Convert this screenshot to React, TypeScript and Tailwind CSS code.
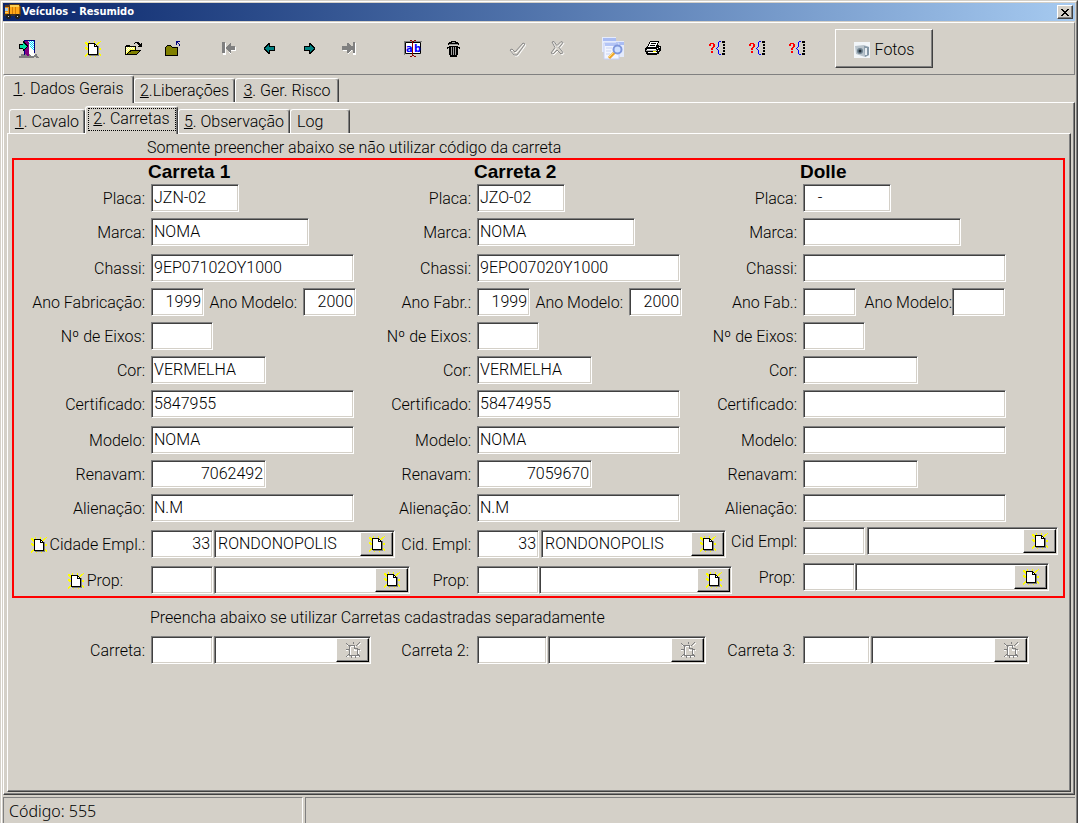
import { ReactNode } from "react";

const sunken =
  "bg-white border border-t-[#808080] border-l-[#808080] border-b-white border-r-white shadow-[inset_1px_1px_0_#404040,inset_-1px_-1px_0_#d4d0c8]";

const NewIcon = ({ disabled = false }: { disabled?: boolean }) => (
  <svg
    width="16"
    height="16"
    viewBox="0 0 16 16"
    shapeRendering="crispEdges"
    className="shrink-0"
  >
    {disabled ? (
      <>
        <path
          d="M2 2h1v1h1v1H2zM15 1h1v1h-1v1h-1v1h-1V3h1V2h1zM5 4h6v1H5zM5 4v10h1V4zM6 14h8v1H6zM13 7h1v8h-1zM1 8h2v1H1zM15 8h1v1h-1zM2 14h2v1H2zM14 13h1v2h-1zM9 5h1v3h3v1H9z"
          fill="#fff"
        />
        <path
          d="M1 1h1v1h1v1h1v1H3V3H2V2H1zM14 0h1v1h-1v1h-1v1h-1v1h-1V3h1V2h1V1h1zM8 0h1v2H8zM4 3h6v1H4zM4 3h1v11H4zM4 13h9v1H4zM12 6h1v8h-1zM9 3h1v3h3v1H9zM1 7h3v1H1zM13 7h2v1h-2zM1 14h1v-1h1v-1h1v1H3v1H2v1H1zM13 12h1v1h1v2h-1v-1h-1zM6 14h1v2H6zM10 14h1v2h-1z"
          fill="#808080"
        />
      </>
    ) : (
      <>
        <path
          d="M0 1h2v1h1v1h1v2H2V4H1V3H0zM15 0h1v1h-1v1h-1v1h-1v1h-1v1h-2V4h1V3h1V2h1V1h1zM4 0h1v2H4zM9 0h1v2H9zM0 6h2v1h1v2H1V8H0zM14 7h2v2h-2zM0 14h1v-1h1v-1h2v2H2v1H1v1H0zM14 12h1v1h1v2h-1v-1h-1zM5 14h1v2H5zM10 14h1v2h-1z"
          fill="#ffff00"
        />
        <path d="M12 5h2v10H4v-1h8z" fill="#808080" />
        <path d="M3 2h7v1h1v1h1v1h1v9H3z" fill="#000" />
        <path d="M4 3h5v3h3v7H4z" fill="#fff" />
        <path d="M10 4h1v1h-1z" fill="#fff" />
      </>
    )}
  </svg>
);

const TruckIcon = () => (
  <svg width="18" height="16" viewBox="0 0 18 16" shapeRendering="crispEdges">
    <path d="M1 1h4v-1h11v2h1v10H1z" fill="#5a3a18" />
    <path d="M6 1h9v10H6z" fill="#ffa818" />
    <path d="M6 1h9v2H6z" fill="#ffd050" />
    <path d="M8 3h1v7H8zM11 3h1v7h-1z" fill="#d07c08" />
    <path d="M15 2h1v9h-1z" fill="#b86a08" />
    <path d="M1 3h4v8H1z" fill="#f09010" />
    <path d="M1 4h3v3H1z" fill="#a8c8d8" />
    <path d="M1 8h3v1H1z" fill="#ffd860" />
    <path d="M0 10h17v2H0z" fill="#3a3128" />
    <path d="M3 10h3v1h1v3H6v1H3v-1H2v-3h1zM12 10h3v1h1v3h-1v1h-3v-1h-1v-3h1z" fill="#202020" />
    <path d="M4 12h1v1H4zM13 12h1v1h-1z" fill="#d0d0d0" />
  </svg>
);

const ExitIcon = () => (
  <svg width="20" height="18" viewBox="0 0 20 18" shapeRendering="crispEdges">
    <path d="M2 14h9l3 2 2-2h2v2h1v1h1v1h-3v-1h-2l-1 1H0v-2h2z" fill="#808080" />
    <path d="M5 0h11v13h-1V1H6v14H5z" fill="#000080" />
    <path d="M6 1h3l1 2v13H8l-2-3z" fill="#800080" />
    <path d="M10 1h5v12l1 2-2 1h-2l-2-2z" fill="#fff" />
    <path d="M10 1h1v1h-1zM12 1h1v1h-1zM14 1h1v1h-1zM11 2h1v1h-1zM13 2h1v1h-1zM10 3h1v1h-1zM12 3h1v1h-1zM14 3h1v1h-1zM11 4h1v1h-1zM13 4h1v1h-1zM12 5h1v1h-1zM14 5h1v1h-1zM11 6h1v1h-1zM13 6h1v1h-1zM12 7h1v1h-1zM14 7h1v1h-1zM13 8h1v1h-1zM14 9h1v1h-1z" fill="#00d8ff" />
    <path d="M4 1h1v1h1v1h1v1h1v1h1v2H8v1H7v1H6v1H5v1H4V9H0V4h4z" fill="#000" />
    <path d="M4 3h1v1h1v1h1v1h1v1H7v1H6v1H4V8H1V5h3z" fill="#00e0a0" />
  </svg>
);

const OpenIcon = () => (
  <svg width="17" height="14" viewBox="0 0 17 14" shapeRendering="crispEdges">
    <path d="M9 1h1V0h4v1h1v1h1V1h1v4h-4V4h1V3h-1V2h-1V1h-2v1H9z" fill="#000" />
    <path d="M0 4h1V3h4v1h6v4h5v1h-1v1h-1v1h-1v1h-1v1H0z" fill="#000" />
    <path d="M1 5h9v3H5v1H4v1H3v1H2v1H1z" fill="#ffff60" />
    <path d="M1 5h1v1H1zM3 5h1v1H3zM5 5h1v1H5zM7 5h1v1H7zM2 6h1v1H2zM4 6h1v1H4zM6 6h1v1H6zM8 6h1v1H8zM1 7h1v1H1zM3 7h1v1H3zM2 8h1v1H2zM1 9h1v1H1z" fill="#fff" />
    <path d="M6 9h8v1h-1v1h-1v1H3v-1h1v-1h2z" fill="#808000" />
  </svg>
);

const CloseFolderIcon = () => (
  <svg width="16" height="15" viewBox="0 0 16 15" shapeRendering="crispEdges">
    <path d="M0 6h1V5h1V4h4v1h1v1h6v9H0z" fill="#000" />
    <path d="M2 5h4v1h1v1h5v7H1V6h1z" fill="#808000" />
    <path d="M11 0h4v1h-2v1h1v1h1v2h-1V3h-1V2h-1v2h-1z" fill="#000080" />
  </svg>
);

const Arrow = ({ right = false }: { right?: boolean }) => (
  <svg
    width="11"
    height="11"
    viewBox="0 0 11 11"
    shapeRendering="crispEdges"
    className={right ? "-scale-x-100" : ""}
  >
    <path d="M4 0h2v3h5v5H6v3H4v-1H3V9H2V8H1V7H0V4h1V3h1V2h1V1h1z" fill="#000" />
    <path d="M4 2h1v2h5v3H5v2H4V8H3V7H2V6H1V5h1V4h1V3h1z" fill="#008080" />
  </svg>
);

const EndArrow = ({ right = false }: { right?: boolean }) => (
  <svg width="14" height="13" viewBox="0 0 14 13" shapeRendering="crispEdges">
    {right ? (
      <>
        <path d="M1 5h5V2l5 5-4 5H6V9H1zM11 1h3v12h-3z" fill="#fff" />
        <path d="M0 4h5V1h1l4 4v2l-4 4H5V8H0zM10 0h3v11h-3z" fill="#808080" />
        <path d="M10 0h1v4h-1zM10 8h1v3h-1z" fill="#d4d0c8" />
      </>
    ) : (
      <>
        <path d="M1 1h3v12H1zM5 7l4-5v3h5v4H9v4z" fill="#fff" />
        <path d="M0 0h3v11H0zM4 5l4-4h1v3h4v4H9v3H8L4 7z" fill="#808080" />
      </>
    )}
  </svg>
);

const RenameIcon = () => (
  <svg width="19" height="17" viewBox="0 0 19 17">
    <path d="M0 1h18v1H1v13H0z" fill="#808080" />
    <path d="M1.500 2.500h15v11h-15z" fill="#fff" stroke="#000" />
    <text x="2" y="12" fontSize="11" fontWeight="700" fontFamily="DejaVu Sans Condensed, sans-serif" fill="#0000ff">
      a
    </text>
    <text x="10" y="12" fontSize="11" fontWeight="700" fontFamily="DejaVu Sans Condensed, sans-serif" fill="#0000ff">
      b
    </text>
    <path d="M6 0h2v1h2V0h2v1h-2v1H9v13h1v1h2v1h-2v-1H8v1H6v-1h2V2H8V1H6z" fill="#900000" />
  </svg>
);

const TrashIcon = () => (
  <svg width="13" height="16" viewBox="0 0 13 16" shapeRendering="crispEdges">
    <path d="M4 0h5v1h2v1h1v2H1V2h1V1h2zM2 5h9v9h-1v2H3v-2H2zM0 6h2v1H1v1H0zM11 6h2v2h-1V7h-1z" fill="#000" />
    <path d="M5 1h3v1H5zM2 3h9v1H2zM4 6h1v8H4zM6 6h1v8H6zM8 6h1v8H8z" fill="#a0a0a0" />
  </svg>
);

const CheckIcon = () => (
  <svg width="17" height="16" viewBox="0 0 17 16">
    <path d="M1 9l2-1 3 3 8-9 2 1-8 11H5z" fill="none" stroke="#fff" transform="translate(1 1)" />
    <path d="M1 9l2-1 3 3 8-9 2 1-8 11H5z" fill="none" stroke="#8a8a8a" />
  </svg>
);

const CancelIcon = () => (
  <svg width="15" height="15" viewBox="0 0 15 15">
    <path d="M2 1l2-0.5 3 4 4-4 2 1-4 5 4 5-2 1.500-4-4-4 4-2-1 4-5.500z" fill="none" stroke="#fff" transform="translate(1 1)" />
    <path d="M2 1l2-0.5 3 4 4-4 2 1-4 5 4 5-2 1.500-4-4-4 4-2-1 4-5.500z" fill="none" stroke="#8a8a8a" />
  </svg>
);

const SearchDocsIcon = () => (
  <svg width="23" height="23" viewBox="0 0 23 23">
    <path d="M0 0h14v15H0z" fill="#e6ecfc" />
    <path d="M1 1h13v3H1z" fill="#a9bcf4" />
    <path d="M9 4h13v16H9z" fill="#e4ebfd" />
    <path d="M14 5h8v3h-8z" fill="#a9bcf4" />
    <path d="M2 6h15v16H2z" fill="#f2f5ff" stroke="#c5d0f4" />
    <path d="M3 6h13v3H3z" fill="#b4c5f6" />
    <path d="M4 11h6M4 14h5M4 17h4" stroke="#c9d3f1" />
    <path d="M13 15l-6 6" stroke="#f0a429" strokeWidth="3" />
    <path d="M12 15l-5 5" stroke="#ffe27a" />
    <circle cx="15.500" cy="12.500" r="4" fill="#cfe0ff" stroke="#7f97dc" strokeWidth="2" />
  </svg>
);

const PrinterIcon = () => (
  <svg width="17" height="15" viewBox="0 0 17 15" shapeRendering="crispEdges">
    <path d="M5 0h9v2h-1v2h1v1h2v5h-1v1h-1v2h-2v1H2v-1H1v-2H0V7h1V6h1V5h1V3h1V1h1z" fill="#000" />
    <path d="M5 1h8v1h-1v2h-1v2H3V5h1V3h1z" fill="#fff" />
    <path d="M6 2h5v1H6zM5 4h5v1H5z" fill="#000" />
    <path d="M2 8h9v1H2zM3 11h9v1H3zM12 7h1v1h-1zM14 6h1v1h-1zM13 9h1v1h-1z" fill="#fff" />
    <path d="M1 9h11v1H1z" fill="#b0b0b0" />
    <path d="M8 10h3v1H8z" fill="#ffff00" />
  </svg>
);

const QueryIcon = () => (
  <svg width="17" height="15" viewBox="0 0 17 15" shapeRendering="crispEdges">
    <path d="M1 2h4v1h1v3H5v1H4v2H2V7h1V6h1V3H2v2H0V3h1zM2 10h2v2H2z" fill="#ff0000" />
    <path d="M10 0h2v1h-2zM9 1h1v5H9zM8 6h1v1H8zM7 7h1v1H7zM8 8h1v1H8zM9 9h1v4H9zM10 13h2v1h-2z" fill="#0000ff" />
    <path d="M13 0h3v2h-3zM14 3h2v2h-2zM14 6h2v2h-2zM14 9h2v2h-2zM13 12h3v2h-3z" fill="#000" />
  </svg>
);

const PhotoIcon = () => (
  <svg width="16" height="16" viewBox="0 0 16 16">
    <path d="M0 0h16v16H0z" fill="#f2f6f9" />
    <path d="M1 4l9-1 5 2v8l-4 2-9-3z" fill="#b9c4cc" />
    <path d="M10 4l5 1v8l-4 2z" fill="#8497a6" />
    <path d="M11 6h2v7h-2z" fill="#e9eff3" />
    <circle cx="6" cy="9" r="3" fill="#6f8391" />
    <circle cx="6" cy="9" r="1.500" fill="#26323b" />
  </svg>
);

const ToolButton = ({ name, children }: { name: string; children: ReactNode }) => (
  <button aria-label={name} className="w-10 h-8 flex items-center justify-center">
    {children}
  </button>
);

type TInput = {
  id?: string;
  name?: string;
  width: string;
  value?: string;
  right?: boolean;
};

const TextInput = ({ id, name, width, value = "", right }: TInput) => (
  <input
    id={id}
    aria-label={name}
    defaultValue={value}
    className={`${sunken} ${width} ${
      right ? "text-right" : ""
    } h-7 shrink-0 px-0.5 pb-0.5 outline-none`}
  />
);

const LookupInput = ({
  name,
  width,
  value = "",
  disabled,
}: {
  name: string;
  width: string;
  value?: string;
  disabled?: boolean;
}) => (
  <div className={`${sunken} ${width} h-7 shrink-0 flex p-px`}>
    <input
      aria-label={name}
      defaultValue={value}
      className="min-w-0 flex-1 bg-transparent px-0.5 outline-none"
    />
    <button
      aria-label={`Buscar ${name}`}
      disabled={disabled}
      className="w-[33px] flex items-center justify-center bg-[#d4d0c8] border border-t-white border-l-white border-b-black border-r-black shadow-[inset_-1px_-1px_0_#808080]"
    >
      <NewIcon disabled={disabled} />
    </button>
  </div>
);

const Row = ({
  id,
  label,
  icon,
  labelClass = "pr-[6px]",
  children,
}: {
  id: string;
  label: string;
  icon?: boolean;
  labelClass?: string;
  children: ReactNode;
}) => (
  <div className="flex items-center h-7">
    <label
      htmlFor={id}
      className={`${labelClass} w-[137px] shrink-0 flex items-center justify-end gap-[3px] pt-0.5 whitespace-nowrap`}
    >
      {icon && <NewIcon />}
      {label}
    </label>
    {children}
  </div>
);

type TTrailer = {
  id: string;
  title: string;
  placa: string;
  marca?: string;
  chassi?: string;
  anoLabel: string;
  anoFab?: string;
  anoModelo?: string;
  anoModeloClass: string;
  cor?: string;
  certificado?: string;
  modelo?: string;
  renavam?: string;
  alienacao?: string;
  cityLabel: string;
  cityCode?: string;
  city?: string;
  cityGap: string;
  cityWidth: string;
  ownerCodeWidth: string;
  ownerGap: string;
  ownerWidth: string;
  ownerLabelClass: string;
  icons?: boolean;
  footerClass: string;
};

const trailers: TTrailer[] = [
  {
    id: "c1",
    title: "Carreta 1",
    placa: "JZN-02",
    marca: "NOMA",
    chassi: "9EP07102OY1000",
    anoLabel: "Ano Fabricação:",
    anoFab: "1999",
    anoModelo: "2000",
    anoModeloClass: "w-[99px] pr-[6px]",
    cor: "VERMELHA",
    certificado: "5847955",
    modelo: "NOMA",
    renavam: "7062492",
    alienacao: "N.M",
    cityLabel: "Cidade Empl.:",
    cityCode: "33",
    city: "RONDONOPOLIS",
    cityGap: "gap-px",
    cityWidth: "w-[181px]",
    ownerCodeWidth: "w-[62px]",
    ownerGap: "gap-px",
    ownerWidth: "w-[196px]",
    ownerLabelClass: "pr-7",
    icons: true,
    footerClass: "mt-2",
  },
  {
    id: "c2",
    title: "Carreta 2",
    placa: "JZO-02",
    marca: "NOMA",
    chassi: "9EPO07020Y1000",
    anoLabel: "Ano Fabr.:",
    anoFab: "1999",
    anoModelo: "2000",
    anoModeloClass: "w-[99px] pr-[6px]",
    cor: "VERMELHA",
    certificado: "58474955",
    modelo: "NOMA",
    renavam: "7059670",
    alienacao: "N.M",
    cityLabel: "Cid. Empl:",
    cityCode: "33",
    city: "RONDONOPOLIS",
    cityGap: "gap-0.5",
    cityWidth: "w-[185px]",
    ownerCodeWidth: "w-[62px]",
    ownerGap: "gap-0",
    ownerWidth: "w-[193px]",
    ownerLabelClass: "pr-2",
    footerClass: "mt-2",
  },
  {
    id: "c3",
    title: "Dolle",
    placa: "   -",
    anoLabel: "Ano Fab.:",
    anoModeloClass: "w-[96px]",
    cityLabel: "Cid Empl:",
    cityGap: "gap-0.5",
    cityWidth: "w-[191px]",
    ownerCodeWidth: "w-[52px]",
    ownerGap: "gap-0",
    ownerWidth: "w-[194px]",
    ownerLabelClass: "pr-2",
    footerClass: "mt-[5px]",
  },
];

const TrailerColumn = ({ t }: { t: TTrailer }) => (
  <div className="w-[326px] shrink-0 last:w-auto last:flex-1 flex flex-col">
    <h2 className="h-6 pl-[134px] text-[19px] leading-6 font-bold font-['Liberation_Sans',Arial,sans-serif]">
      {t.title}
    </h2>
    <div className="flex flex-col gap-1.5">
      <Row id={`${t.id}-placa`} label="Placa:">
        <TextInput id={`${t.id}-placa`} width="w-[88px]" value={t.placa} />
      </Row>
      <Row id={`${t.id}-marca`} label="Marca:">
        <TextInput id={`${t.id}-marca`} width="w-[158px]" value={t.marca} />
      </Row>
    </div>
    <div className="mt-2 flex flex-col gap-1.5">
      <Row id={`${t.id}-chassi`} label="Chassi:">
        <TextInput id={`${t.id}-chassi`} width="w-[203px]" value={t.chassi} />
      </Row>
      <Row id={`${t.id}-fab`} label={t.anoLabel}>
        <TextInput id={`${t.id}-fab`} width="w-[53px]" value={t.anoFab} right />
        <label
          htmlFor={`${t.id}-ano`}
          className={`${t.anoModeloClass} shrink-0 pt-0.5 text-right whitespace-nowrap`}
        >
          Ano Modelo:
        </label>
        <TextInput id={`${t.id}-ano`} width="w-[53px]" value={t.anoModelo} right />
      </Row>
      <Row id={`${t.id}-eixos`} label="Nº de Eixos:">
        <TextInput id={`${t.id}-eixos`} width="w-[62px]" />
      </Row>
      <Row id={`${t.id}-cor`} label="Cor:">
        <TextInput id={`${t.id}-cor`} width="w-[115px]" value={t.cor} />
      </Row>
      <Row id={`${t.id}-cert`} label="Certificado:">
        <TextInput id={`${t.id}-cert`} width="w-[203px]" value={t.certificado} />
      </Row>
    </div>
    <div className="mt-2 flex flex-col gap-1.5">
      <Row id={`${t.id}-modelo`} label="Modelo:">
        <TextInput id={`${t.id}-modelo`} width="w-[203px]" value={t.modelo} />
      </Row>
      <Row id={`${t.id}-renavam`} label="Renavam:">
        <TextInput id={`${t.id}-renavam`} width="w-[115px]" value={t.renavam} right />
      </Row>
      <Row id={`${t.id}-alien`} label="Alienação:">
        <TextInput id={`${t.id}-alien`} width="w-[203px]" value={t.alienacao} />
      </Row>
    </div>
    <div className={`${t.footerClass} flex flex-col gap-2`}>
      <Row id={`${t.id}-cidade`} label={t.cityLabel} icon={t.icons}>
        <div className={`${t.cityGap} flex`}>
          <TextInput id={`${t.id}-cidade`} width="w-[62px]" value={t.cityCode} right />
          <LookupInput name="Cidade" width={t.cityWidth} value={t.city} />
        </div>
      </Row>
      <Row
        id={`${t.id}-prop`}
        label="Prop:"
        icon={t.icons}
        labelClass={t.ownerLabelClass}
      >
        <div className={`${t.ownerGap} flex`}>
          <TextInput id={`${t.id}-prop`} width={t.ownerCodeWidth} />
          <LookupInput name="Proprietário" width={t.ownerWidth} />
        </div>
      </Row>
    </div>
  </div>
);

const Tab = ({
  hotkey,
  label,
  selected,
  focused,
  width,
}: {
  hotkey?: string;
  label: string;
  selected?: boolean;
  focused?: boolean;
  width: string;
}) => (
  <button
    role="tab"
    aria-selected={!!selected}
    className={`${width} ${
      selected ? "h-7 -mb-px relative pb-0.5" : "h-6 pt-px"
    } shrink-0 flex items-center justify-center whitespace-nowrap rounded-t-[3px] bg-[#d4d0c8] border-t border-l border-r border-t-white border-l-white border-r-[#404040] shadow-[inset_-1px_0_0_#808080]`}
  >
    <span
      className={
        focused
          ? "w-[88px] h-[23px] leading-[22px] outline-1 -outline-offset-1 outline-dotted outline-black"
          : ""
      }
    >
      {hotkey && <u>{hotkey}</u>}
      {label}
    </span>
  </button>
);

const linked = [
  { id: "l1", label: "Carreta:", code: "w-[62px]", name: "w-[157px]", labelClass: "pr-[6px]" },
  { id: "l2", label: "Carreta 2:", code: "w-[70px]", name: "w-[158px]", labelClass: "pr-2" },
  { id: "l3", label: "Carreta 3:", code: "w-[67px]", name: "w-[158px]", labelClass: "pr-2" },
];

const App = () => {
  return (
    <div className="min-h-screen flex flex-col pr-px overflow-hidden text-black font-light font-['Roboto','Liberation_Sans',sans-serif] text-[16px] leading-5">
      <div className="flex-1 flex flex-col bg-[#d4d0c8] border-t border-l border-r border-t-[#d4d0c8] border-l-[#d4d0c8] border-r-[#404040]">
        <div className="flex-1 flex flex-col border-t border-l border-r border-t-white border-l-white border-r-[#808080] p-px pb-0">
          <header className="h-[18px] flex items-center pl-px pr-0.5 bg-linear-to-r from-[#0a246a] to-[#a6caf0]">
            <TruckIcon />
            <h1 className="flex-1 text-white font-bold text-[11px] leading-4 font-['DejaVu_Sans_Condensed','DejaVu_Sans',sans-serif]">
              Veículos - Resumido
            </h1>
            <button
              aria-label="Fechar"
              className="w-4 h-3.5 flex items-center justify-center bg-[#d4d0c8] border border-t-white border-l-white border-b-[#404040] border-r-[#404040] shadow-[inset_-1px_-1px_0_#808080]"
            >
              <svg width="8" height="7" viewBox="0 0 8 7" shapeRendering="crispEdges">
                <path
                  d="M0 0h2v1h1v1h2V1h1V0h2v1H7v1H6v1H5v1h1v1h1v1h1v1H6V6H5V5H3v1H2v1H0V6h1V5h1V4h1V3H2V2H1V1H0z"
                  fill="#000"
                />
              </svg>
            </button>
          </header>

          <div className="mt-px h-[53px] flex items-center pl-[5px] border border-t-white border-l-white border-b-[#808080] border-r-[#808080]">
            <ToolButton name="Sair"><ExitIcon /></ToolButton>
            <div className="ml-6 flex">
              <ToolButton name="Novo"><NewIcon /></ToolButton>
              <ToolButton name="Abrir"><OpenIcon /></ToolButton>
              <ToolButton name="Fechar ficha"><CloseFolderIcon /></ToolButton>
            </div>
            <div className="ml-4 flex">
              <ToolButton name="Primeiro"><EndArrow /></ToolButton>
              <ToolButton name="Anterior"><Arrow /></ToolButton>
              <ToolButton name="Próximo"><Arrow right /></ToolButton>
              <ToolButton name="Último"><EndArrow right /></ToolButton>
            </div>
            <div className="ml-6 flex">
              <ToolButton name="Alterar"><RenameIcon /></ToolButton>
              <ToolButton name="Excluir"><TrashIcon /></ToolButton>
            </div>
            <div className="ml-6 flex">
              <ToolButton name="Confirmar"><CheckIcon /></ToolButton>
              <ToolButton name="Cancelar"><CancelIcon /></ToolButton>
            </div>
            <div className="ml-4 flex">
              <ToolButton name="Pesquisar"><SearchDocsIcon /></ToolButton>
              <ToolButton name="Imprimir"><PrinterIcon /></ToolButton>
            </div>
            <div className="ml-6 flex">
              <ToolButton name="Consulta 1"><QueryIcon /></ToolButton>
              <ToolButton name="Consulta 2"><QueryIcon /></ToolButton>
              <ToolButton name="Consulta 3"><QueryIcon /></ToolButton>
            </div>
            <button className="ml-[18px] w-[98px] h-[39px] flex items-center justify-center gap-[5px] pt-0.5 border border-t-white border-l-white border-b-[#404040] border-r-[#404040] shadow-[inset_-1px_-1px_0_#808080]">
              <PhotoIcon />
              Fotos
            </button>
          </div>

          <div role="tablist" className="h-[27px] flex items-end">
            <Tab hotkey="1" label=". Dados Gerais" width="w-[131px]" selected />
            <Tab hotkey="2" label=".Liberações" width="w-[101px]" />
            <Tab hotkey="3" label=". Ger. Risco" width="w-[104px]" />
          </div>
          <main className="flex-1 flex flex-col pt-1 pl-[3px] pr-[3px] pb-0.5 border border-t-white border-l-white border-b-[#404040] border-r-[#404040] shadow-[inset_-1px_-1px_0_#808080]">
            <div role="tablist" className="h-[26px] flex items-end pl-0.5">
              <Tab hotkey="1" label=". Cavalo" width="w-[76px]" />
              <Tab hotkey="2" label=". Carretas" width="w-[93px]" selected focused />
              <Tab hotkey="5" label=". Observação" width="w-[112px]" />
              <button
                role="tab"
                aria-selected={false}
                className="h-6 w-[60px] pl-[6px] pt-px text-left rounded-t-[3px] border-t border-l border-r border-t-white border-l-white border-r-[#404040] shadow-[inset_-1px_0_0_#808080]"
              >
                Log
              </button>
            </div>
            <div className="flex-1 flex flex-col px-1 border border-t-white border-l-white border-b-[#404040] border-r-[#404040] shadow-[inset_-1px_-1px_0_#808080]">
              <p className="h-6 pt-1 pl-[135px]">
                Somente preencher abaixo se não utilizar código da carreta
              </p>
              <section className="mr-px flex border-2 border-[#ff0000] pb-0.5">
                {trailers.map((t) => (
                  <TrailerColumn key={t.id} t={t} />
                ))}
              </section>
              <p className="mt-2 h-[30px] pt-0.5 pl-[138px]">
                Preencha abaixo se utilizar Carretas cadastradas separadamente
              </p>
              <div className="flex pl-0.5">
                {linked.map((l) => (
                  <div key={l.id} className="w-[326px] shrink-0 last:w-auto last:flex-1">
                    <Row id={l.id} label={l.label} labelClass={l.labelClass}>
                      <div className="flex gap-px">
                        <TextInput id={l.id} width={l.code} />
                        <LookupInput name={l.label} width={l.name} disabled />
                      </div>
                    </Row>
                  </div>
                ))}
              </div>
            </div>
          </main>

          <footer className="mt-0.5 h-[26px] flex gap-0.5 font-['Noto_Sans',sans-serif]">
            <div className="w-[300px] pl-[5px] pt-[3px] border-t border-l border-r border-t-[#808080] border-l-[#808080] border-r-white">
              Código: 555
            </div>
            <div className="flex-1 border-t border-l border-t-[#808080] border-l-[#808080]" />
          </footer>
        </div>
      </div>
    </div>
  );
};

export default App;
